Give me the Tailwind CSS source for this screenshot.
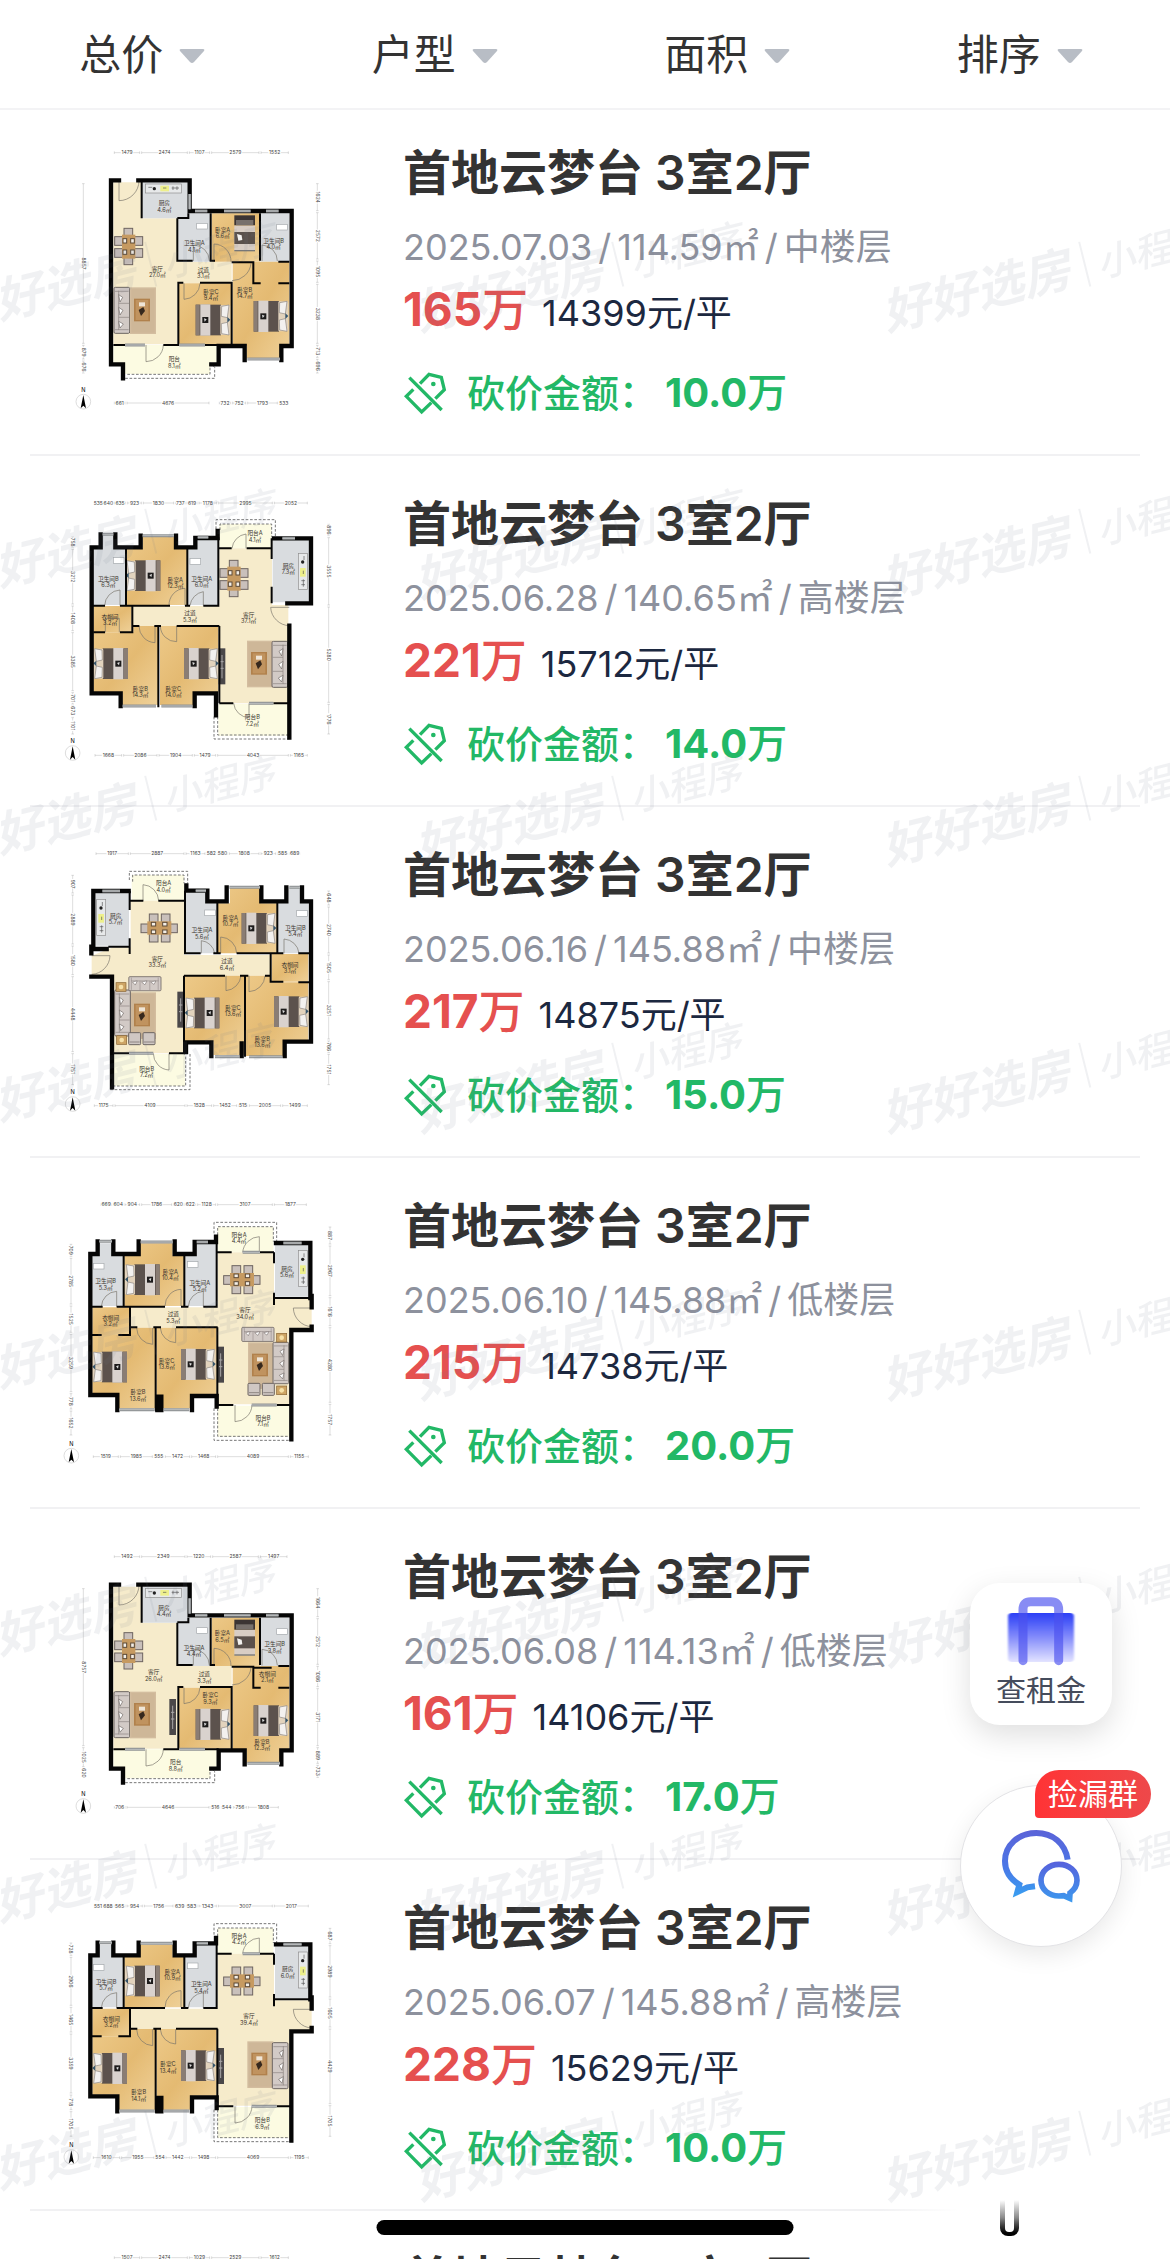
<!DOCTYPE html>
<html lang="zh-CN">
<head>
    <meta charset="UTF-8">
    <meta name="viewport" content="width=device-width, initial-scale=1.0">
    <title>成交房源</title>
    <script src="https://cdn.jsdelivr.net/npm/@tailwindcss/browser@4"></script>
</head>
<body class="h-screen overflow-hidden bg-white font-['Inter','Noto_Sans_CJK_SC',sans-serif] text-[#333]">
    <!-- 户型图公用图形 -->
    <svg class="absolute size-0" aria-hidden="true">
        <defs>
            <linearGradient id="wood" x1="0" y1="0" x2="1" y2="1">
                <stop offset="0" stop-color="#edc988"/><stop offset="0.5" stop-color="#e4ba72"/><stop offset="1" stop-color="#efd199"/>
            </linearGradient>
            <g id="bed">
                <rect width="76" height="92" y="1" fill="#5c524d"/>
                <rect width="12" height="92" y="1" fill="#8a7d74"/>
                <rect x="14" width="30" height="94" fill="#d9d2ce"/>
                <rect x="20" y="38" width="18" height="18" fill="#1d1b1b"/><path d="M25 42l8 3-6 7z" fill="#ddd"/>
                <rect x="74" y="2" width="30" height="90" rx="4" fill="#e2d3bd"/>
                <path d="M78 6l22-4-5 38-18-4zM78 88l22 4-5-38-18 4z" fill="#f3f1ef" stroke="#8b8581" stroke-width="2"/>
                <path d="M95 38l9 8-9 9z" fill="#36556b"/>
            </g>
            <g id="bedv">
                <rect width="62" height="30" fill="#3b3433"/><rect x="5" y="14" width="52" height="16" fill="#77706c"/>
                <rect y="31" width="62" height="76" fill="#d8cdc4"/><rect y="50" width="62" height="36" fill="#5a504b"/>
                <path d="M8 56l14 4 2 14-12 2z" fill="#f3f1ef"/><rect y="104" width="62" height="4" fill="#777"/>
            </g>
            <g id="dine">
                <g fill="#c9c0bb" stroke="#6d6460" stroke-width="3">
                    <rect x="28" y="2" width="26" height="26"/><rect x="64" y="2" width="26" height="26"/>
                    <rect x="28" y="60" width="26" height="26"/><rect x="64" y="60" width="26" height="26"/>
                    <rect x="3" y="32" width="22" height="26"/><rect x="90" y="32" width="22" height="26"/>
                </g>
                <rect x="22" y="24" width="72" height="40" fill="#c69a61"/>
                <g fill="#f3eee6" stroke="#5c4a38" stroke-width="3">
                    <rect x="34" y="27" width="13" height="11"/><rect x="68" y="27" width="13" height="11"/>
                    <rect x="34" y="50" width="13" height="11"/><rect x="68" y="50" width="13" height="11"/>
                </g>
            </g>
            <g id="sofa">
                <rect width="47" height="138" rx="4" fill="#d2cac6" stroke="#6d6562" stroke-width="3"/>
                <path d="M14 10V128M14 48H45M14 90H45M3 12H44M3 127H44" stroke="#8b8380" stroke-width="2" fill="none"/>
                <path d="M14 22l12 8-8 14zM14 60l13 9-9 14zM14 102l14 8-10 12z" fill="#fff" stroke="#6d6562" stroke-width="2"/>
            </g>
            <g id="rug">
                <rect width="78" height="140" fill="#d3bd9f"/><rect x="4" y="4" width="70" height="132" fill="#ceb798"/>
                <rect x="12" y="34" width="48" height="68" fill="#b1814c"/><rect x="17" y="38" width="38" height="60" fill="#c0935f"/>
                <path d="M26 68l14-9 5 12-12 15z" fill="#36281d"/><rect x="27" y="45" width="18" height="12" fill="#efe5d6"/>
            </g>
            <g id="chair">
                <rect width="36" height="36" rx="3" fill="#cfc7c3" stroke="#6d6562" stroke-width="3"/><path d="M3 28H33" stroke="#6d6562" stroke-width="2"/>
            </g>
            <g id="side">
                <rect width="30" height="26" fill="#cda464" stroke="#8a6430" stroke-width="2"/><circle cx="15" cy="13" r="7" fill="#f6e1a8"/>
            </g>
            <g id="tv"><rect width="20" height="108" fill="#4a4749"/><path d="M10 20V90M5 40H15M5 60H15" stroke="#a9a7a8" stroke-width="3"/></g>
            <g id="stove">
                <rect width="108" height="27" fill="#e7e9ea" stroke="#8d8d8d" stroke-width="2"/>
                <rect x="44" y="5" width="26" height="17" fill="#eef08b"/><circle cx="26" cy="14" r="5" fill="#222"/>
                <path d="M8 10H20M78 12H100M82 7V18M94 7V18M52 12H62" stroke="#555" stroke-width="2"/>
            </g>
            <g id="basin"><rect width="32" height="17" fill="#fff" stroke="#a4a9ac" stroke-width="2"/></g>
        </defs>
    </svg>

    <div class="relative flex h-full flex-col overflow-hidden">
        <header class="shrink-0 border-b-2 border-[#f3f3f5] bg-white">
            <nav id="filters" class="grid h-27 grid-cols-4"></nav>
        </header>

        <main class="relative min-h-0 flex-1 overflow-hidden">
            <ul id="houseList" class="mx-[30px]"></ul>

            <!-- 水印 -->
            <svg class="pointer-events-none absolute inset-0 size-full" aria-hidden="true">
                <defs>
                    <pattern id="mark" x="412" y="94" width="467" height="267" patternUnits="userSpaceOnUse">
                        <g transform="translate(8 127) rotate(-14)" fill="#6b7488" fill-opacity="0.1" font-style="italic">
                            <text class="text-5xl font-bold">好好选房</text>
                            <rect x="207" y="-40" width="2" height="46"/>
                            <text x="220" class="text-[38px] font-medium">小程序</text>
                        </g>
                    </pattern>
                </defs>
                <rect width="100%" height="100%" fill="url(#mark)"/>
            </svg>
        </main>

        <!-- 悬浮按钮 -->
        <div class="absolute right-12 bottom-[312px] flex flex-col items-center gap-[60px]">
            <button class="flex size-[142px] flex-col items-center rounded-[30px] bg-white pt-[13px] shadow-[0_10px_30px_rgba(0,0,0,0.13)]">
                <svg class="h-[72px] w-[72px]" viewBox="196 110 216 216">
                    <defs>
                        <linearGradient id="bag" x1="0" y1="0" x2="0" y2="1">
                            <stop offset="0" stop-color="#2b3ff6"/><stop offset="0.5" stop-color="#858dfb"/><stop offset="1" stop-color="#e3e3ff"/>
                        </linearGradient>
                        <filter id="soft" x="-10%" y="-10%" width="120%" height="120%"><feGaussianBlur stdDeviation="3 1"/></filter>
                    </defs>
                    <rect x="205" y="161" width="198" height="147" rx="12" fill="url(#bag)" filter="url(#soft)"/>
                    <path d="M250 304V150Q250 127 273 127H334Q357 127 357 150V304" fill="none" stroke="#4a50ee" stroke-opacity="0.66" stroke-width="27" stroke-linecap="round"/>
                </svg>
                <span class="mt-1 text-[30px] leading-9 text-[#454c5c]">查租金</span>
            </button>
            <button class="relative flex size-[162px] items-center justify-center rounded-full border border-[#e3e3e6] bg-white shadow-[0_8px_24px_rgba(0,0,0,0.09)]" aria-label="捡漏群">
                <svg class="h-[78px] w-[82px]" viewBox="182 806 246 234" fill="none">
                    <defs>
                        <linearGradient id="chat" gradientUnits="userSpaceOnUse" x1="0" y1="815" x2="0" y2="1030">
                            <stop offset="0" stop-color="#5b63d8"/><stop offset="0.5" stop-color="#4b76e6"/><stop offset="1" stop-color="#35a4f2"/>
                        </linearGradient>
                        <linearGradient id="chat2" gradientUnits="userSpaceOnUse" x1="0" y1="910" x2="0" y2="1030">
                            <stop offset="0" stop-color="#5761dc"/><stop offset="1" stop-color="#3c98ee"/>
                        </linearGradient>
                    </defs>
                    <path d="M385 904C378 855 340 824 291 824C237 824 197 861 197 908C197 938 212 962 240 979L234 1001L264 987L287 984" stroke="url(#chat)" stroke-width="18"/>
                    <path d="M392 1004C406 994 413 981 413 966C413 938 389 918 359 918C329 918 305 938 305 966C305 994 329 1013 359 1013L373 1012L391 1020Z" stroke="url(#chat2)" stroke-width="17"/>
                </svg>
                <span class="absolute -top-4 left-[74px] flex h-12 w-29 items-center justify-center rounded-3xl rounded-bl-sm bg-linear-to-r from-[#ff3335] to-[#ee484a] text-[30px] text-white">捡漏群</span>
            </button>
        </div>

        <!-- 底部横条 -->
        <div class="absolute right-[30px] bottom-3 flex h-12 w-[260px] justify-end bg-linear-to-r from-white/0 to-white to-30% pr-[121px]">
            <div class="mt-px h-9 w-[19px] rounded-b-lg bg-linear-to-b from-white via-[#888] to-black px-[5px]"><div class="h-8 rounded-b bg-white"></div></div>
        </div>
        <div class="absolute bottom-6 left-1/2 h-[15px] w-[417px] -translate-x-1/2 rounded-full bg-black"></div>
    </div>

    <script>
        const L = '#f6ebcb', G = '#d9dcdf', W = 'url(#wood)', B = '#fcfbe2';

        // 户型 A:南向单阳台
        const planA = {
            rooms: [
                [L, '190,157 275,157 275,265 382,265 382,395 545,395 545,460 382,460 382,643 190,643'],
                [G, '275,157 415,157 415,265 275,265'], [G, '385,250 485,250 485,395 385,395'],
                [W, '485,250 630,250 630,395 485,395'], [G, '632,250 718,250 718,395 632,395'],
                [W, '387,460 545,460 545,643 387,643'],
                [W, '548,395 718,395 718,648 690,648 690,685 590,685 590,648 548,648'],
                [B, '190,645 500,645 500,697 480,697 480,732 225,732 225,700 190,700']
            ],
            outer: 'M207 151H183V703H219V745M265 151H419V243H725V648H694V690M584 690V648H506V703H484',
            inner: 'M275 151V265M382 265V392H428M415 250V264H382M482 250V392H495M630 250V392M545 397H610V460H632M382 458H400M450 458H548M385 458V643M545 458V648M685 460H718M685 395H718M190 645H225M340 645H388M465 645H506',
            win: 'M419 192V238M435 243H472M522 243H602M648 243H686M592 687H690M225 645H285M388 645H465',
            doors: 'M207 153V212A60 60 0 0 0 267 152M430 393V345A48 48 0 0 1 478 393M492 395V342A52 52 0 0 1 543 395M636 393V345A48 48 0 0 1 682 393M603 400A58 58 0 0 1 546 452M402 460V508A50 50 0 0 0 450 460M288 645V695A52 52 0 0 0 340 645',
            dash: 'M232 733H480V697L494 712V745H215',
            items: [['dine', '280 292', 'rotate(90)'], ['sofa', '192 472'], ['rug', '240 472'], ['stove', '287 162'], ['basin', '440 280'], ['basin', '680 283'],
                ['bedv', '553 256'], ['bed', '437 523'], ['bed', '611 512']],
            north: [100, 815]
        };

        // 户型 C:南北双阳台
        const planC = {
            rooms: [
                [G, '127,227 148,227 148,190 188,190 188,227 220,227 220,378 127,378'],
                [W, '223,227 268,227 268,190 368,190 368,227 402,227 402,378 223,378'],
                [G, '405,227 440,227 440,190 500,190 500,378 405,378'],
                [B, '503,140 670,140 670,217 503,217'], [G, '675,195 775,195 775,350 675,350'],
                [W, '127,382 240,382 240,465 127,465'],
                [L, '503,217 672,217 672,357 785,357 785,445 718,445 718,673 503,673 503,443 243,443 243,382 503,382'],
                [W, '127,465 243,465 243,443 315,443 315,685 205,685 205,640 127,640'],
                [W, '320,443 500,443 500,643 428,643 428,685 320,685'], [B, '503,677 718,677 718,770 503,770']
            ],
            outer: 'M143 184V222H121V645H202V690M190 184V222H266V184M374 184V222H434V186H498V170M678 189H781V354M785 348V382M785 440V450H724V778M322 690V650M334 690V650M426 690V648H500V680',
            inner: 'M221 222V378M403 222V378M500 186V378M121 380H158M200 380H345M393 380H415M460 380H503M240 380V465H205M121 465H155M240 442H262M310 442H333M378 442H503M317 442V694M502 442V673M503 217H545M630 217H672M672 217V250M672 338V375M672 354H781M503 675H550M680 675H722',
            win: 'M148 184H186M272 186H368M440 186H474M700 189H755M208 689H312M342 689H418M605 675H680M578 217H630',
            doors: 'M200 380V334A48 48 0 0 0 154 380M393 378V328A50 50 0 0 0 345 378M460 380V334A48 48 0 0 0 415 380M308 444V493A50 50 0 0 1 260 444M377 444V488A48 48 0 0 1 331 444M628 217V170A52 52 0 0 0 578 217M785 384H730A58 58 0 0 0 785 440M555 675V725A52 52 0 0 0 606 675',
            dash: 'M503 165V140H670V185M492 160V127H680V185M503 685V769H718M492 685V781H728',
            items: [['dine', '518 255'], ['stove', '772 212', 'rotate(90)'], ['basin', '130 250'], ['basin', '412 245'], ['tv', '502 500'],
                ['bed', '329 252', 'scale(-1 1)'], ['bed', '231 514', 'scale(-1 1)'], ['bed', '393 506']],
            north: [64, 827]
        };

        const houses = [
            {
                date: '2025.07.03', size: '114.59', floor: '中楼层', price: '165', unit: '14399', cut: '10.0',
                plan: { ...planA, top: -3,
                    labels: [[343, 220, '厨房', '4.6㎡'], [433, 340, '卫生间A', '4.1㎡'], [518, 299, '卧室A', '6.6㎡'], [671, 333, '卫生间B', '4.0㎡'], [322, 416, '客厅', '27.0㎡'], [460, 420, '过道', '3.1㎡'], [483, 485, '卧室C', '9.4㎡'], [584, 480, '卧室B', '14.7㎡'], [373, 688, '阳台', '8.1㎡']],
                    dims: [['h', 68, [190, 272, 415, 482, 630, 718], [1479, 2474, 1107, 2579, 1552]], ['h', 819, [190, 228, 480, 505, 545, 590, 685, 718], [661, 4676, '', 732, 752, 1793, 533]],
                        ['v', 100, [158, 643, 690, 732], [8857, 879, 676]], ['v', 802, [158, 245, 390, 460, 643, 685, 732], [1624, 2572, 1095, 3238, 713, 696]]] }
            },
            {
                date: '2025.06.28', size: '140.65', floor: '高楼层', price: '221', unit: '15712', cut: '14.0',
                plan: { top: 0,
                    rooms: [
                        [G, '130,205 155,205 155,165 190,165 190,205 228,205 228,375 130,375'],
                        [W, '230,205 278,205 278,167 372,167 372,205 412,205 412,375 230,375'],
                        [G, '415,205 440,205 440,172 505,172 505,375 415,375'],
                        [B, '508,132 665,132 665,205 508,205'], [G, '668,178 778,178 778,367 668,367'],
                        [W, '130,378 245,378 245,457 130,457'],
                        [L, '508,205 666,205 666,375 715,375 715,670 508,670 508,438 248,438 248,378 508,378'],
                        [W, '130,457 250,457 250,438 325,438 325,675 217,675 217,637 130,637'],
                        [W, '330,438 505,438 505,637 430,637 430,675 330,675'], [B, '505,672 715,672 715,767 505,767']
                    ],
                    outer: 'M152 163V202H125V640H212V678M196 163V202H272V167M378 167V202H436V174H503V153M672 175H783V370H712M718 437V773M434 678V640H498V706',
                    inner: 'M228 205V375M412 205V375M505 172V375M125 377H165M210 377H360M405 377H420M460 377H508M247 377V457H210M130 457H165M247 438H268M313 438H333M325 438V682M380 438H508M508 438V670M508 205H545M590 205H665M665 175V237M665 320V370M508 670H550M670 670H715',
                    win: 'M158 163H190M278 167H372M443 172H475M697 175H735M218 678H318M334 678H426M597 670H670',
                    doors: 'M210 377V330A48 48 0 0 0 164 377M405 377V325A50 50 0 0 0 357 377M460 377V335A48 48 0 0 0 420 377M315 438V488A50 50 0 0 1 267 438M380 438V485A48 48 0 0 1 331 438M588 205V162A48 48 0 0 0 546 205M718 382H662A58 58 0 0 0 718 437M597 670V713A48 48 0 0 1 551 670M166 457V415H208V457',
                    dash: 'M510 150V132H665V170M498 147V119H676V175M503 710V765H716M492 710V777H724',
                    items: [['dine', '596 238', 'rotate(90)'], ['stove', '772 220', 'rotate(90)'], ['basin', '190 233'], ['basin', '420 236'], ['tv', '506 505'],
                        ['rug', '591 482'], ['sofa', '713 484', 'scale(-1 1)'], ['bed', '331 240', 'scale(-1 1)'], ['bed', '234 504', 'scale(-1 1)'], ['bed', '402 504']],
                    labels: [[175, 296, '卫生间B', '6.3㎡'], [376, 300, '卧室A', '12.3㎡'], [455, 296, '卫生间A', '6.0㎡'], [615, 160, '阳台A', '4.1㎡'], [715, 258, '厨房', '7.3㎡'], [180, 411, '衣帽间', '3.2㎡'], [420, 400, '过道', '5.3㎡'], [596, 405, '客厅', '37.1㎡'], [271, 627, '卧室B', '14.3㎡'], [370, 627, '卧室C', '14.0㎡'], [607, 712, '阳台B', '7.2㎡']],
                    dims: [['h', 69, [130, 160, 190, 230, 277, 374, 408, 444, 503, 670, 775], [535, 640, 635, 923, 1830, 737, 619, 1178, 2995, 2052]], ['h', 826, [132, 218, 324, 430, 500, 718, 775], [1668, 2086, 1904, 1479, 4043, 1165]],
                        ['v', 68, [168, 205, 375, 455, 635, 675, 710, 765], [758, 3212, 1408, 3385, 701, 673, 1101]], ['v', 836, [130, 170, 378, 670, 765], [896, 3555, 5280, 1776]]],
                    north: [68, 819] }
            },
            {
                date: '2025.06.16', size: '145.88', floor: '中楼层', price: '217', unit: '14875', cut: '15.0',
                plan: { top: 3,
                    rooms: [
                        [G, '137,190 237,190 237,347 137,347'], [B, '245,135 402,135 402,212 245,212'],
                        [L, '242,212 402,212 402,375 660,375 660,437 402,437 402,670 192,670 192,437 125,437 125,377 190,352 242,352'],
                        [G, '407,185 468,185 468,215 500,215 500,370 407,370'],
                        [W, '503,220 540,220 540,172 632,172 632,220 682,220 682,370 503,370'],
                        [G, '685,215 715,215 715,172 750,172 750,215 775,215 775,370 685,370'],
                        [W, '665,372 775,372 775,455 665,455'], [W, '405,437 583,437 583,675 490,675 490,635 405,635'],
                        [W, '588,437 660,437 660,457 775,457 775,632 700,632 700,678 588,678'], [B, '192,672 405,672 405,768 192,768']
                    ],
                    outer: 'M236 183H130V350M124 350V370M126 357H170M124 440H186V772M409 166V182H472V214H530V172M634 172V214H709V172M756 172V214H783V635H704V678M484 678V637H408V666M575 640V678',
                    inner: 'M405 182V370H452M502 214V370M490 370H512M560 370H700M682 214V370M745 370H778M662 370V455H700M745 457H778M402 437H525M570 437H595M645 437H662M402 437V670M585 437V680M239 183V240M239 325V372M175 350H240M192 670H237M357 670H405M242 212H280M325 212H402',
                    win: 'M157 183H210M437 182H468M538 172H630M718 172H750M495 680H568M597 680H696M237 670H310',
                    doors: 'M279 212V164A50 50 0 0 1 326 212M125 377H180A58 58 0 0 1 125 433M454 370V332A45 45 0 0 1 494 370M512 370V321A50 50 0 0 1 560 370M702 370V327A48 48 0 0 1 747 370M573 437A50 50 0 0 1 528 482V437M645 437A50 50 0 0 1 597 485V437M357 670V720A50 50 0 0 1 310 670',
                    dash: 'M248 155V135H402V160M238 150V124H413V160M407 680V768H192M420 672V779H180',
                    items: [['dine', '270 250'], ['stove', '167 208', 'rotate(90)'], ['basin', '464 240'], ['basin', '740 242'], ['rug', '240 487'], ['sofa', '194 480'], ['sofa', '333 440', 'rotate(90) scale(0.9 0.7)'],
                        ['side', '198 458'], ['side', '200 617'], ['chair', '236 608'], ['chair', '279 608'], ['tv', '382 485'], ['bed', '575 248'], ['bed', '508 502', 'scale(-1 1)'], ['bed', '672 498']],
                    labels: [[197, 258, '厨房', '5.7㎡'], [341, 160, '阳台A', '4.0㎡'], [456, 301, '卫生间A', '5.6㎡'], [541, 264, '卧室A', '10.7㎡'], [736, 294, '卫生间B', '5.4㎡'], [322, 386, '客厅', '33.3㎡'], [531, 394, '过道', '6.4㎡'], [720, 404, '衣帽间', '3.1㎡'], [549, 533, '卧室C', '13.6㎡'], [637, 627, '卧室B', '13.6㎡'], [290, 717, '阳台B', '7.2㎡']],
                    dims: [['h', 71, [135, 238, 405, 468, 500, 535, 630, 680, 716, 752], [1917, 2887, 1163, 582, 580, 1808, 923, 585, 689]], ['h', 827, [130, 192, 408, 488, 563, 595, 695, 775], [1175, 4109, 1528, 1452, 515, 2005, 1499]],
                        ['v', 68, [133, 192, 345, 437, 668, 767], [907, 2889, 1580, 4448, 1751]], ['v', 836, [180, 228, 372, 452, 630, 670, 767], [648, 2740, 1505, 3251, 766, 1751]]],
                    north: [68, 822] }
            },
            {
                date: '2025.06.10', size: '145.88', floor: '低楼层', price: '215', unit: '14738', cut: '20.0',
                plan: { ...planC, top: 6,
                    items: [...planC.items, ['rug', '594 487'], ['sofa', '716 487', 'scale(-1 0.9)'], ['sofa', '672 442', 'rotate(90) scale(0.9 0.7)'], ['side', '680 460'], ['side', '680 618'], ['chair', '594 610'], ['chair', '637 610']],
                    labels: [[167, 304, '卫生间B', '5.3㎡'], [361, 276, '卧室A', '10.4㎡'], [449, 309, '卫生间A', '5.2㎡'], [567, 164, '阳台A', '4.4㎡'], [711, 267, '厨房', '5.6㎡'], [182, 413, '衣帽间', '3.2㎡'], [370, 403, '过道', '5.3㎡'], [585, 391, '客厅', '34.0㎡'], [350, 542, '卧室C', '13.6㎡'], [264, 637, '卧室B', '13.6㎡'], [639, 714, '阳台B', '7.1㎡']],
                    dims: [['h', 74, [150, 187, 222, 272, 368, 402, 440, 500, 670, 772], [669, 604, 904, 1786, 620, 622, 1128, 3107, 1877]], ['h', 830, [127, 208, 310, 343, 422, 500, 718, 778], [1519, 1985, 555, 1472, 1468, 4089, 1155]],
                        ['v', 63, [190, 232, 375, 460, 638, 690, 768], [709, 2785, 1525, 3259, 778, 1652]], ['v', 840, [138, 195, 350, 440, 670, 768], [887, 2967, 1616, 4280, 1757]]] }
            },
            {
                date: '2025.06.08', size: '114.13', floor: '低楼层', price: '161', unit: '14106', cut: '17.0',
                plan: { ...planA, top: -4,
                    inner: planA.inner + 'M610 460H632M610 400H665',
                    items: [...planA.items, ['tv', '358 494']],
                    labels: [[342, 220, '厨房', '4.4㎡'], [432, 340, '卫生间A', '4.4㎡'], [517, 297, '卧室A', '6.5㎡'], [674, 330, '卫生间B', '3.8㎡'], [311, 414, '客厅', '26.0㎡'], [463, 420, '过道', '3.3㎡'], [481, 483, '卧室C', '9.3㎡'], [652, 418, '衣帽间', '2.1㎡'], [636, 623, '卧室B', '12.3㎡'], [377, 684, '阳台', '8.8㎡']],
                    dims: [['h', 67, [190, 272, 408, 485, 628, 714], [1492, 2349, 1220, 2587, 1497]], ['h', 819, [190, 228, 480, 512, 548, 592, 688], [706, 4646, 516, 544, 756, 1808]],
                        ['v', 100, [160, 637, 700, 732], [8757, 1025, 620]], ['v', 803, [160, 250, 393, 460, 637, 690, 732], [1664, 2512, 1086, 3171, 889, 733]]] }
            },
            {
                date: '2025.06.07', size: '145.88', floor: '高楼层', price: '228', unit: '15629', cut: '10.0',
                plan: { ...planC, top: 8,
                    items: [...planC.items, ['rug', '592 480'], ['sofa', '714 484', 'scale(-1 1)']],
                    labels: [[168, 301, '卫生间B', '5.7㎡'], [367, 272, '卧室A', '10.9㎡'], [454, 309, '卫生间A', '5.4㎡'], [567, 164, '阳台A', '4.2㎡'], [713, 264, '厨房', '6.0㎡'], [184, 412, '衣帽间', '3.2㎡'], [597, 405, '客厅', '39.4㎡'], [354, 549, '卧室C', '13.4㎡'], [266, 633, '卧室B', '14.1㎡'], [637, 717, '阳台B', '6.9㎡']],
                    dims: [['h', 74, [130, 158, 190, 228, 280, 372, 406, 444, 502, 670, 778], [551, 688, 565, 954, 1756, 639, 583, 1343, 3007, 2017]], ['h', 829, [127, 212, 315, 345, 422, 500, 718, 778], [1610, 1955, 554, 1442, 1498, 4069, 1195]],
                        ['v', 63, [182, 225, 375, 455, 638, 688, 768], [728, 2906, 1465, 3359, 718, 1705]], ['v', 840, [138, 190, 350, 440, 670, 768], [687, 2989, 1605, 4429, 1705]]] }
            },
            {
                date: '2025.06.05', size: '114.59', floor: '中楼层', price: '163', unit: '14225', cut: '12.0',
                plan: { ...planA, top: 0, labels: [], dims: [['h', 68, [190, 272, 415, 482, 630, 718], [1507, 2474, 1029, 2529, 1612]]] }
            }
        ];

        // 尺寸标注线
        function dimLine([dir, pos, stops, labels]) {
            let out = '';
            labels.forEach((label, i) => {
                const a = stops[i], b = stops[i + 1], mid = (a + b) / 2;
                if (label === '') return;
                out += dir === 'h'
                    ? `<path d="M${a + 3} ${pos}H${b - 3}M${a + 3} ${pos - 4}V${pos + 4}M${b - 3} ${pos - 4}V${pos + 4}"/><text x="${mid}" y="${pos + 5}">${label}</text>`
                    : `<path d="M${pos} ${a + 3}V${b - 3}M${pos - 4} ${a + 3}H${pos + 4}M${pos - 4} ${b - 3}H${pos + 4}"/><text transform="translate(${pos - 5} ${mid}) rotate(90)">${label}</text>`;
            });
            return out;
        }

        // 绘制户型图
        function drawPlan(p) {
            const [nx, ny] = p.north;
            return `
                <svg class="size-[300px] shrink-0" viewBox="0 ${p.top} 900 900" role="img" aria-label="户型图">
                    ${p.rooms.map(([fill, pts]) => `<polygon points="${pts}" fill="${fill}"/>`).join('')}
                    ${p.items.map(([id, at, extra]) => `<use href="#${id}" transform="translate(${at}) ${extra || ''}"/>`).join('')}
                    <g fill="none">
                        <path d="${p.doors}" stroke="#77736a" stroke-width="2"/>
                        <path d="${p.dash}" stroke="#777" stroke-width="3" stroke-dasharray="8 5"/>
                        <path d="${p.outer}" stroke="#050505" stroke-width="13" stroke-linecap="square"/>
                        <path d="${p.inner}" stroke="#050505" stroke-width="6"/>
                        <path d="${p.win}" stroke="#8f9294" stroke-width="9"/>
                        <path d="${p.win}" stroke="#d5d7d8" stroke-width="2"/>
                    </g>
                    <g fill="#3a352e" font-size="17" text-anchor="middle">
                        ${p.labels.map(([x, y, name, area]) => `<text x="${x}" y="${y + 6}">${name}</text><text x="${x}" y="${y + 25}">${area}</text>`).join('')}
                    </g>
                    <g fill="#444" stroke="#999" stroke-width="1" font-size="15" text-anchor="middle" class="[&_text]:stroke-white [&_text]:stroke-[6px] [&_text]:[paint-order:stroke]">
                        ${p.dims.map(dimLine).join('')}
                    </g>
                    <circle cx="${nx}" cy="${ny}" r="22" fill="#fff" stroke="#ccc" stroke-width="2"/>
                    <path d="M${nx} ${ny - 20}L${nx + 8} ${ny + 20}L${nx} ${ny + 12}L${nx - 8} ${ny + 20}Z" fill="#000"/>
                    <text x="${nx}" y="${ny - 30}" font-size="17" text-anchor="middle">N</text>
                </svg>`;
        }

        function loadFilters() {
            document.getElementById('filters').innerHTML = ['总价', '户型', '面积', '排序'].map(name => `
                <button class="flex items-center justify-center gap-4 pr-2 text-[42px]">
                    ${name}
                    <svg class="mt-1 h-4 w-[26px]" viewBox="0 0 26 16"><path d="M2 1H24Q26 1 25 3L15 14Q13 16 11 14L1 3Q0 1 2 1Z" fill="#b8bdc5"/></svg>
                </button>`).join('');
        }

        function loadHouses() {
            document.getElementById('houseList').innerHTML = houses.map(h => `
                <li class="flex gap-[53px] border-b-2 border-[#f1f1f3] pt-6 pb-[25px] pl-5 first:pt-[19px]">
                    ${drawPlan(h.plan)}
                    <div class="pt-[14px] whitespace-nowrap">
                        <h2 class="text-5xl leading-[60px] font-semibold">首地云梦台 3室2厅</h2>
                        <p class="mt-5 flex gap-[6px] text-4xl leading-12 text-[#8d919d]"><span>${h.date}</span><span>/</span><span>${h.size}㎡</span><span>/</span><span>${h.floor}</span></p>
                        <p class="mt-[10px] flex h-14 items-baseline gap-[14px] leading-14"><strong class="text-[46px] font-bold text-[#e5504f]">${h.price}<span class="font-medium">万</span></strong><span class="text-4xl text-[#1c2840]">${h.unit}元/平</span></p>
                        <p class="mt-7 -mb-2 flex h-14 items-center text-[38px] leading-14 font-medium text-[#22b866]">
                            <svg class="mr-5 size-11" viewBox="41 721 132 132" fill="none" stroke="currentColor" stroke-width="10">
                                <path d="M92 759L119 731L156 740L165 777L138 804M72 776L51 797L97 844L126 816M60 741L157 838"/><circle cx="132" cy="760" r="7" fill="currentColor" stroke="none"/>
                            </svg>
                            砍价金额：<strong class="ml-2 text-[40px] font-bold">${h.cut}<span class="font-medium">万</span></strong>
                        </p>
                    </div>
                </li>`).join('');
        }

        loadFilters();
        loadHouses();
    </script>
</body>
</html>
